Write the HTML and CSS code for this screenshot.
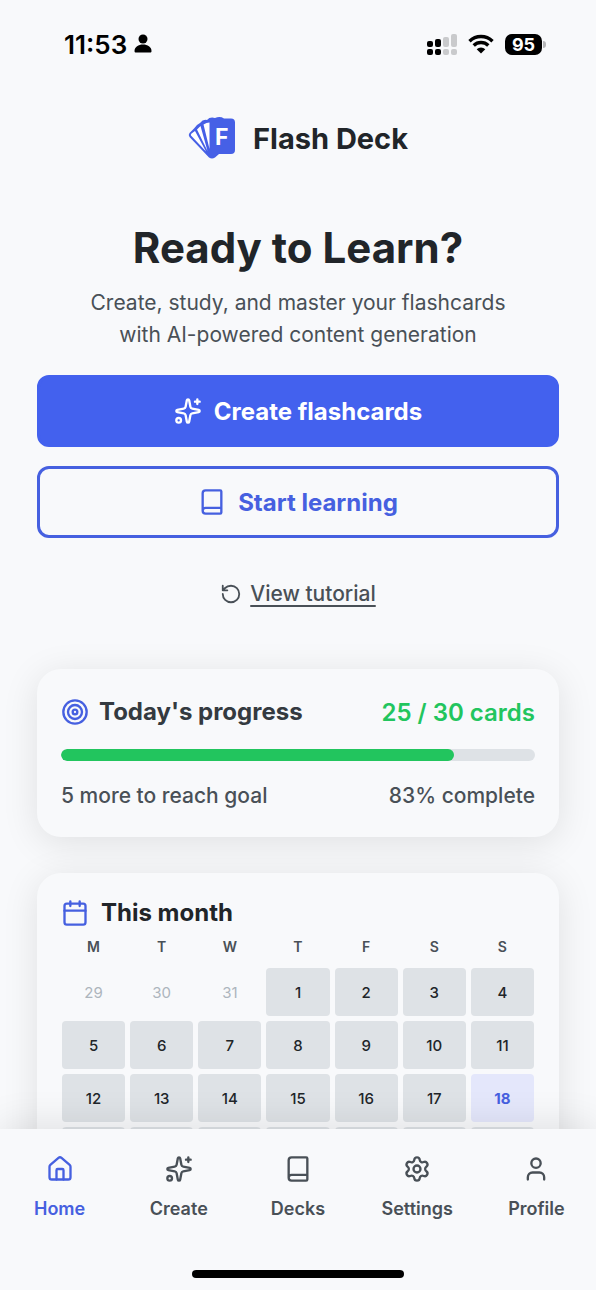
FILE: index.html
```html
<!DOCTYPE html>
<html lang="en">
<head>
<meta charset="utf-8">
<meta name="viewport" content="width=device-width, initial-scale=1">
<title>Flash Deck</title>
<link rel="stylesheet" href="styles.css">
</head>
<body>
<svg class="sprite" aria-hidden="true">
  <symbol id="sparkles" viewBox="0 0 24 24">
    <path d="M11.017 2.814a1 1 0 0 1 1.966 0l1.051 5.558a2 2 0 0 0 1.594 1.594l5.558 1.051a1 1 0 0 1 0 1.966l-5.558 1.051a2 2 0 0 0-1.594 1.594l-1.051 5.558a1 1 0 0 1-1.966 0l-1.051-5.558a2 2 0 0 0-1.594-1.594l-5.558-1.051a1 1 0 0 1 0-1.966l5.558-1.051a2 2 0 0 0 1.594-1.594z"/>
    <path d="M20 2v4M22 4h-4"/><circle cx="4" cy="20" r="2"/>
  </symbol>
  <symbol id="book" viewBox="0 0 24 24">
    <path d="M4 19.500v-15A2.500 2.500 0 0 1 6.500 2H19a1 1 0 0 1 1 1v18a1 1 0 0 1-1 1H6.500a2.500 2.500 0 0 1 0-5H20"/>
  </symbol>
</svg>
<div class="app">
  <div class="status">
    <div class="status-left">
      <span>11:53</span>
      <svg class="person" viewBox="0 0 18 20"><circle cx="9" cy="5" r="4.500"/><path d="M.5 17c0-4 4-6.500 8.500-6.500s8.500 2.500 8.500 6.500c0 1-.5 1.500-1.500 1.500H2C1 18.500.5 18 .5 17z"/></svg>
    </div>
    <div class="status-right">
      <svg class="signal" viewBox="0 0 30 21">
        <g><rect x="0" y="7" width="6" height="6" rx="2"/><rect x="8" y="5" width="6" height="8" rx="2"/><rect x="0" y="15" width="6" height="6" rx="2"/><rect x="8" y="15" width="6" height="6" rx="2"/></g>
        <g fill="#c9cacc"><rect x="16" y="3" width="6" height="10" rx="2"/><rect x="24" y="0" width="6" height="13" rx="2"/><rect x="16" y="15" width="6" height="6" rx="2"/><rect x="24" y="15" width="6" height="6" rx="2"/></g>
      </svg>
      <svg class="wifi" viewBox="0 0 26 20"><path d="M1.500 7.200a16.500 16.500 0 0 1 23 0M5.700 11.500a10.500 10.500 0 0 1 14.600 0" fill="none" stroke="#000" stroke-width="3.400"/><path d="M8.700 15.200a6.200 6.200 0 0 1 8.600 0L13 19.500z"/></svg>
      <span class="battery">95</span>
    </div>
  </div>
  <main class="content">
    <header class="brand">
      <svg class="logo" viewBox="0 0 48 44">
        <path fill="#4660e6" d="M1.500 17L6 12.500Q9 8 12 7 15 3 19 4 22 .5 27 2 32 0 36 2.500H43q4 0 4 4V34q0 4-4 4H31l-4 3.500q-3 2-6 0L1.500 21Q0 19 1.500 17z"/>
        <path fill="#fff" d="M3 19.500q-.5-1 .5-2L7 15l11 20.500zM9 13.500l3.500-3.500 7 25zM15.500 8.500q3-2 6-2V33z"/>
        <text x="27" y="29">F</text>
      </svg>
      <span>Flash Deck</span>
    </header>
    <section class="hero">
      <h1>Ready to Learn?</h1>
      <p>Create, study, and master your flashcards with AI-powered content generation</p>
      <button class="button primary" type="button"><svg class="icon"><use href="#sparkles"/></svg>Create flashcards</button>
      <button class="button outline" type="button"><svg class="icon"><use href="#book"/></svg>Start learning</button>
      <a class="tutorial" href="#"><svg class="icon small" viewBox="0 0 24 24"><path d="M3 12a9 9 0 1 0 9-9 9.750 9.750 0 0 0-6.740 2.740L3 8M3 3v5h5"/></svg><span>View tutorial</span></a>
    </section>
    <section class="card progress">
      <div class="row">
        <h2><svg class="icon accent" viewBox="0 0 24 24"><circle cx="12" cy="12" r="10"/><circle cx="12" cy="12" r="6"/><circle cx="12" cy="12" r="2"/></svg>Today's progress</h2>
        <strong>25 / 30 cards</strong>
      </div>
      <div class="track" role="progressbar" aria-label="Today's progress" aria-valuenow="83" aria-valuemin="0" aria-valuemax="100"><div class="fill" style="width:83%"></div></div>
      <div class="row note"><span>5 more to reach goal</span><span>83% complete</span></div>
    </section>
    <section class="card month">
      <h2><svg class="icon accent" viewBox="0 0 24 24"><path d="M8 2v4M16 2v4M3 10h18"/><rect x="3" y="4" width="18" height="18" rx="2"/></svg>This month</h2>
      <table>
        <thead><tr><th>M</th><th>T</th><th>W</th><th>T</th><th>F</th><th>S</th><th>S</th></tr></thead>
        <tbody>
          <tr><td class="other">29</td><td class="other">30</td><td class="other">31</td><td>1</td><td>2</td><td>3</td><td>4</td></tr>
          <tr><td>5</td><td>6</td><td>7</td><td>8</td><td>9</td><td>10</td><td>11</td></tr>
          <tr><td>12</td><td>13</td><td>14</td><td>15</td><td>16</td><td>17</td><td class="today">18</td></tr>
          <tr><td></td><td></td><td></td><td></td><td></td><td></td><td></td></tr>
        </tbody>
      </table>
    </section>
  </main>
  <nav class="tabs">
    <div class="tab-row">
      <a class="active" href="#"><svg class="icon" viewBox="0 0 24 24"><path d="M15 21v-8a1 1 0 0 0-1-1h-4a1 1 0 0 0-1 1v8"/><path d="M3 10a2 2 0 0 1 .709-1.528l7-5.999a2 2 0 0 1 2.582 0l7 5.999A2 2 0 0 1 21 10v9a2 2 0 0 1-2 2H5a2 2 0 0 1-2-2z"/></svg>Home</a>
      <a href="#"><svg class="icon"><use href="#sparkles"/></svg>Create</a>
      <a href="#"><svg class="icon"><use href="#book"/></svg>Decks</a>
      <a href="#"><svg class="icon" viewBox="0 0 24 24"><path d="M9.671 4.136a2.340 2.340 0 0 1 4.659 0 2.340 2.340 0 0 0 3.319 1.915 2.340 2.340 0 0 1 2.330 4.033 2.340 2.340 0 0 0 0 3.831 2.340 2.340 0 0 1-2.330 4.033 2.340 2.340 0 0 0-3.319 1.915 2.340 2.340 0 0 1-4.659 0 2.340 2.340 0 0 0-3.320-1.915 2.340 2.340 0 0 1-2.330-4.033 2.340 2.340 0 0 0 0-3.831A2.340 2.340 0 0 1 6.350 6.051a2.340 2.340 0 0 0 3.319-1.915"/><circle cx="12" cy="12" r="3"/></svg>Settings</a>
      <a href="#"><svg class="icon" viewBox="0 0 24 24"><path d="M19 21v-2a4 4 0 0 0-4-4H9a4 4 0 0 0-4 4v2"/><circle cx="12" cy="7" r="4"/></svg>Profile</a>
    </div>
    <div class="home-bar"></div>
  </nav>
</div>
</body>
</html>
```
FILE: styles.css
```css
* { box-sizing: border-box; }
body { margin: 0; background: #f8f9fb; color: #212529; font-family: Inter, "Liberation Sans", sans-serif; }
h1, h2, p { margin: 0; }
a { color: inherit; text-decoration: none; }
.sprite { display: none; }
.app { height: 100vh; display: flex; flex-direction: column; overflow: hidden; }
.icon { width: 28px; height: 28px; flex: none; fill: none; stroke: currentColor; stroke-width: 2; stroke-linecap: round; stroke-linejoin: round; }
.icon.small { width: 22px; height: 22px; }
.accent { color: #4660e0; }

.status { display: flex; justify-content: space-between; align-items: center; flex: none; height: 88px; padding: 0 54px 0 64px; color: #000; font-size: 26px; font-weight: 600; }
.status-left { display: flex; align-items: center; gap: 7px; }
.status-right { display: flex; align-items: center; gap: 11px; }
.person { width: 18px; height: 20px; }
.signal { width: 30px; height: 21px; }
.wifi { width: 26px; height: 20px; }
.battery { position: relative; width: 37px; height: 21px; border-radius: 7px; background: #000; color: #fff; font-size: 18px; font-weight: 700; line-height: 21px; text-align: center; }
.battery::after { content: ""; position: absolute; left: 38px; top: 7px; width: 3px; height: 7px; border-radius: 0 3px 3px 0; background: #b5b6b8; }

.content { flex: 1; min-height: 0; padding: 0 37px; overflow-y: auto; scrollbar-width: none; }
.brand { display: flex; align-items: center; justify-content: center; gap: 17px; height: 100px; font-size: 29px; font-weight: 700; }
.logo { width: 48px; height: 44px; }
.logo text { fill: #fff; font-size: 23px; font-weight: 700; }

.hero { display: flex; flex-direction: column; align-items: center; padding-top: 34px; text-align: center; }
h1 { font-size: 42px; line-height: 52px; font-weight: 700; }
.hero p { max-width: 440px; margin: 13px 0 24px; color: #495057; font-size: 21px; line-height: 32px; }
.button { display: flex; align-items: center; justify-content: center; gap: 12px; width: 100%; height: 72px; border: 3px solid #4660e0; border-radius: 12px; font: 700 24px Inter, "Liberation Sans", sans-serif; }
.primary { background: #4361ee; border-color: #4361ee; color: #fff; }
.outline { margin-top: 19px; background: transparent; color: #4660e0; }
.tutorial { display: flex; align-items: center; gap: 8px; margin: 40px 0 59px; color: #495057; font-size: 21px; font-weight: 500; line-height: 32px; }
.tutorial span { text-decoration: underline; text-decoration-thickness: 2px; text-underline-offset: 4px; }

.card { margin-bottom: 36px; padding: 24px; border-radius: 24px; background: #f8f9fb; box-shadow: 0 6px 36px rgba(0, 0, 0, 0.1); }
.row { display: flex; align-items: center; justify-content: space-between; }
h2 { display: flex; align-items: center; gap: 12px; font-size: 24px; line-height: 32px; font-weight: 700; }
.progress h2 { gap: 10px; color: #343a40; }
.progress strong { color: #22c55e; font-size: 24px; font-weight: 600; }
.progress .row:first-child { height: 38px; }
.track { height: 12px; margin: 18px 0; border-radius: 6px; background: #dee2e6; overflow: hidden; }
.fill { height: 100%; border-radius: 6px; background: #22c55e; }
.note { color: #495057; font-size: 21px; font-weight: 500; line-height: 34px; }

table { width: calc(100% + 8px); margin: 0 -4px; border-spacing: 5px; table-layout: fixed; }
th { height: 29px; padding: 0 0 4px; color: #495057; font-size: 14px; font-weight: 600; }
td { height: 48px; padding: 0; border-radius: 4px; background: #dee2e6; font-size: 15px; font-weight: 500; text-align: center; }
.other { background: none; color: #adb5bd; font-weight: 400; }
.today { background: #e4e7fb; color: #4660e0; font-weight: 700; }

.tabs { position: relative; flex: none; background: #f8f9fb; box-shadow: 0 -4px 36px rgba(0, 0, 0, 0.1); color: #495057; }
.tab-row { display: grid; grid-template-columns: repeat(5, 1fr); padding-top: 26px; }
.tab-row a { display: flex; flex-direction: column; align-items: center; gap: 13px; font-size: 18px; line-height: 26px; font-weight: 600; }
.tab-row .active { color: #4660e0; }
.home-bar { width: 212px; height: 8px; margin: 48px auto 12px; border-radius: 4px; background: #000; }
```
